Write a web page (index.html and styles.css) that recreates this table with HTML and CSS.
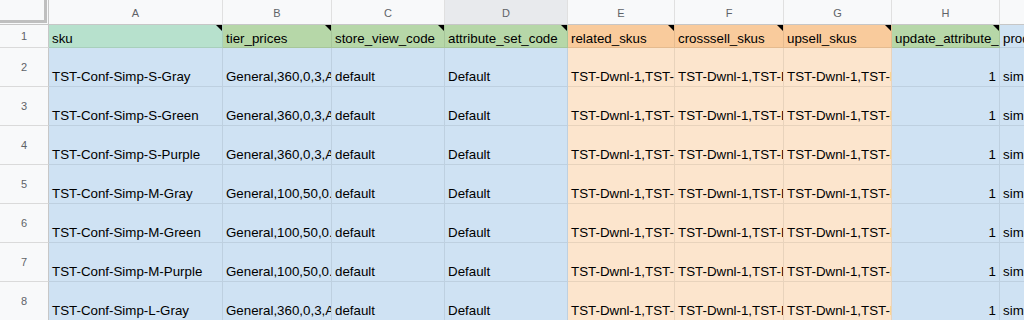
FILE: index.html
```html
<!DOCTYPE html>
<html>
<head>
<meta charset="utf-8">
<link rel="stylesheet" href="styles.css">
</head>
<body>
<div class="viewport">
  <div class="sheet">
    <div class="corner"><div class="corner-inner"></div></div>
    <div class="colhdr">A</div>
    <div class="colhdr">B</div>
    <div class="colhdr">C</div>
    <div class="colhdr selected">D</div>
    <div class="colhdr">E</div>
    <div class="colhdr">F</div>
    <div class="colhdr">G</div>
    <div class="colhdr">H</div>
    <div class="colhdr">I</div>

    <div class="rowhdr short">1</div>
    <div class="cell head mint note">sku</div>
    <div class="cell head green note">tier_prices</div>
    <div class="cell head green note">store_view_code</div>
    <div class="cell head green note">attribute_set_code</div>
    <div class="cell head orange note">related_skus</div>
    <div class="cell head orange note">crosssell_skus</div>
    <div class="cell head orange note">upsell_skus</div>
    <div class="cell head green note">update_attribute_set</div>
    <div class="cell head blue">product_type</div>

    <div class="rowhdr">2</div>
    <div class="cell blue">TST-Conf-Simp-S-Gray</div>
    <div class="cell blue">General,360,0,3,All Websites [USD]</div>
    <div class="cell blue">default</div>
    <div class="cell blue">Default</div>
    <div class="cell peach">TST-Dwnl-1,TST-Dwnl-2</div>
    <div class="cell peach">TST-Dwnl-1,TST-Dwnl-2</div>
    <div class="cell peach">TST-Dwnl-1,TST-Dwnl-2</div>
    <div class="cell blue num">1</div>
    <div class="cell blue">simple</div>

    <div class="rowhdr">3</div>
    <div class="cell blue">TST-Conf-Simp-S-Green</div>
    <div class="cell blue">General,360,0,3,All Websites [USD]</div>
    <div class="cell blue">default</div>
    <div class="cell blue">Default</div>
    <div class="cell peach">TST-Dwnl-1,TST-Dwnl-2</div>
    <div class="cell peach">TST-Dwnl-1,TST-Dwnl-2</div>
    <div class="cell peach">TST-Dwnl-1,TST-Dwnl-2</div>
    <div class="cell blue num">1</div>
    <div class="cell blue">simple</div>

    <div class="rowhdr">4</div>
    <div class="cell blue">TST-Conf-Simp-S-Purple</div>
    <div class="cell blue">General,360,0,3,All Websites [USD]</div>
    <div class="cell blue">default</div>
    <div class="cell blue">Default</div>
    <div class="cell peach">TST-Dwnl-1,TST-Dwnl-2</div>
    <div class="cell peach">TST-Dwnl-1,TST-Dwnl-2</div>
    <div class="cell peach">TST-Dwnl-1,TST-Dwnl-2</div>
    <div class="cell blue num">1</div>
    <div class="cell blue">simple</div>

    <div class="rowhdr">5</div>
    <div class="cell blue">TST-Conf-Simp-M-Gray</div>
    <div class="cell blue">General,100,50,0.5,All Websites [USD]</div>
    <div class="cell blue">default</div>
    <div class="cell blue">Default</div>
    <div class="cell peach">TST-Dwnl-1,TST-Dwnl-2</div>
    <div class="cell peach">TST-Dwnl-1,TST-Dwnl-2</div>
    <div class="cell peach">TST-Dwnl-1,TST-Dwnl-2</div>
    <div class="cell blue num">1</div>
    <div class="cell blue">simple</div>

    <div class="rowhdr">6</div>
    <div class="cell blue">TST-Conf-Simp-M-Green</div>
    <div class="cell blue">General,100,50,0.5,All Websites [USD]</div>
    <div class="cell blue">default</div>
    <div class="cell blue">Default</div>
    <div class="cell peach">TST-Dwnl-1,TST-Dwnl-2</div>
    <div class="cell peach">TST-Dwnl-1,TST-Dwnl-2</div>
    <div class="cell peach">TST-Dwnl-1,TST-Dwnl-2</div>
    <div class="cell blue num">1</div>
    <div class="cell blue">simple</div>

    <div class="rowhdr">7</div>
    <div class="cell blue">TST-Conf-Simp-M-Purple</div>
    <div class="cell blue">General,100,50,0.5,All Websites [USD]</div>
    <div class="cell blue">default</div>
    <div class="cell blue">Default</div>
    <div class="cell peach">TST-Dwnl-1,TST-Dwnl-2</div>
    <div class="cell peach">TST-Dwnl-1,TST-Dwnl-2</div>
    <div class="cell peach">TST-Dwnl-1,TST-Dwnl-2</div>
    <div class="cell blue num">1</div>
    <div class="cell blue">simple</div>

    <div class="rowhdr">8</div>
    <div class="cell blue">TST-Conf-Simp-L-Gray</div>
    <div class="cell blue">General,360,0,3,All Websites [USD]</div>
    <div class="cell blue">default</div>
    <div class="cell blue">Default</div>
    <div class="cell peach">TST-Dwnl-1,TST-Dwnl-2</div>
    <div class="cell peach">TST-Dwnl-1,TST-Dwnl-2</div>
    <div class="cell peach">TST-Dwnl-1,TST-Dwnl-2</div>
    <div class="cell blue num">1</div>
    <div class="cell blue">simple</div>
  </div>
</div>
</body>
</html>
```

FILE: styles.css
```css
html, body {
  margin: 0;
  padding: 0;
  background: #ffffff;
  overflow: hidden;
}

.viewport {
  width: 1024px;
  height: 320px;
  overflow: hidden;
}

.sheet {
  display: grid;
  grid-template-columns: 49px 174px 109px 113px 123px 107px 109px 108px 108px 120px;
  grid-template-rows: 25px 23px repeat(7, 39px);
  width: max-content;
  font-family: "Liberation Sans", Arial, sans-serif;
}

.corner {
  background: #f8f9fa;
  border-right: 1px solid #c7c7c7;
  border-bottom: 1px solid #c7c7c7;
  box-sizing: border-box;
}

.corner-inner {
  width: 44px;
  height: 20px;
  border-right: 3px solid #bfbfbf;
  border-bottom: 3px solid #bfbfbf;
}

.colhdr {
  background: #f8f9fa;
  border-right: 1px solid #e0e0e0;
  border-bottom: 1px solid #c7c7c7;
  box-sizing: border-box;
  color: #5f6368;
  font-size: 11px;
  display: flex;
  align-items: center;
  justify-content: center;
  padding-top: 1px;
}

.colhdr.selected {
  background: #e8eaed;
}

.rowhdr {
  background: #f8f9fa;
  border-right: 1px solid #c7c7c7;
  border-bottom: 1px solid #dadada;
  box-sizing: border-box;
  color: #5f6368;
  font-size: 11px;
  display: flex;
  align-items: center;
  justify-content: center;
}

.cell {
  position: relative;
  box-sizing: border-box;
  border-right: 1px solid rgba(0, 0, 0, 0.08);
  border-bottom: 1px solid rgba(0, 0, 0, 0.08);
  font-size: 13.33px;
  line-height: 15px;
  color: #000000;
  white-space: nowrap;
  overflow: hidden;
  padding: 0 3px 2px 3px;
  display: flex;
  align-items: flex-end;
}

.cell.head {
  padding-bottom: 1px;
}

.cell.num {
  justify-content: flex-end;
}

.mint { background: #b7e1cd; }
.green { background: #b6d7a8; }
.orange { background: #f9cb9c; }
.blue { background: #cfe2f3; }
.peach { background: #fce5cd; }

.note::after {
  content: "";
  position: absolute;
  top: 0;
  right: 0;
  width: 0;
  height: 0;
  border-top: 6px solid #000000;
  border-left: 6px solid transparent;
}
```
